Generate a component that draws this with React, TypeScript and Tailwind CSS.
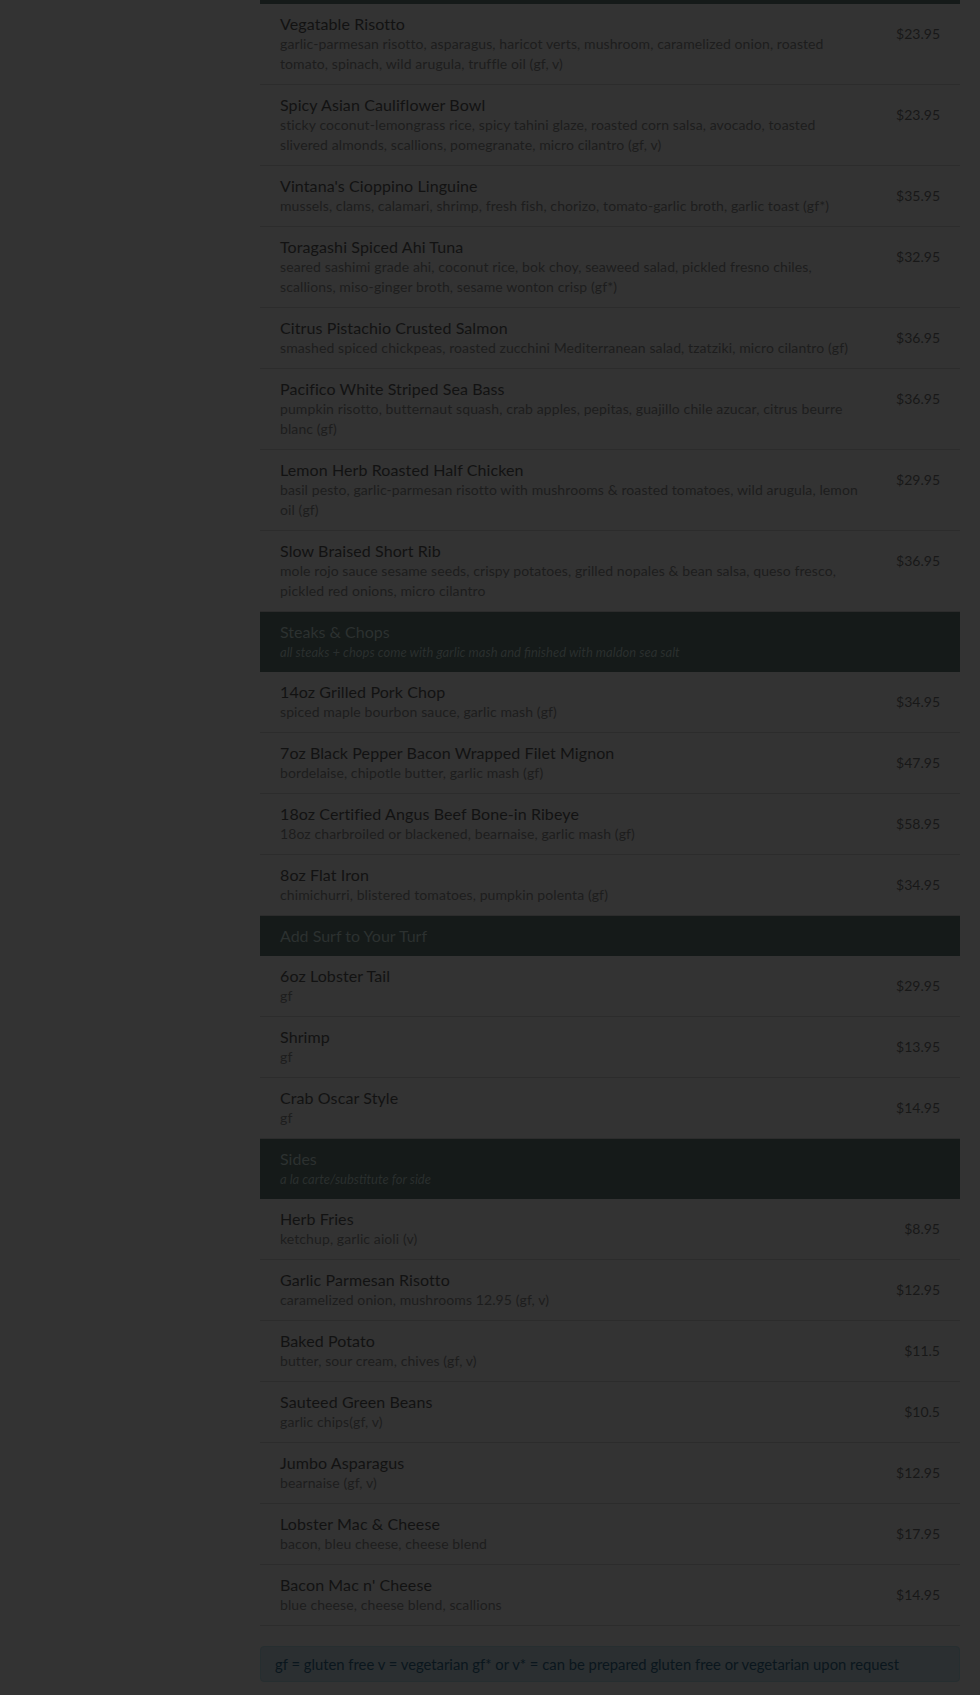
import React from "react";

type Item = { name: string; desc: string; price: string };
type Section = { title?: string; note?: string; items: Item[] };

const sections: Section[] = [
  {
    items: [
      {
        name: "Vegatable Risotto",
        desc: "garlic-parmesan risotto, asparagus, haricot verts, mushroom, caramelized onion, roasted tomato, spinach, wild arugula, truffle oil (gf, v)",
        price: "$23.95",
      },
      {
        name: "Spicy Asian Cauliflower Bowl",
        desc: "sticky coconut-lemongrass rice, spicy tahini glaze, roasted corn salsa, avocado, toasted slivered almonds, scallions, pomegranate, micro cilantro (gf, v)",
        price: "$23.95",
      },
      {
        name: "Vintana's Cioppino Linguine",
        desc: "mussels, clams, calamari, shrimp, fresh fish, chorizo, tomato-garlic broth, garlic toast (gf*)",
        price: "$35.95",
      },
      {
        name: "Toragashi Spiced Ahi Tuna",
        desc: "seared sashimi grade ahi, coconut rice, bok choy, seaweed salad, pickled fresno chiles, scallions, miso-ginger broth, sesame wonton crisp (gf*)",
        price: "$32.95",
      },
      {
        name: "Citrus Pistachio Crusted Salmon",
        desc: "smashed spiced chickpeas, roasted zucchini Mediterranean salad, tzatziki, micro cilantro (gf)",
        price: "$36.95",
      },
      {
        name: "Pacifico White Striped Sea Bass",
        desc: "pumpkin risotto, butternaut squash, crab apples, pepitas, guajillo chile azucar, citrus beurre blanc (gf)",
        price: "$36.95",
      },
      {
        name: "Lemon Herb Roasted Half Chicken",
        desc: "basil pesto, garlic-parmesan risotto with mushrooms & roasted tomatoes, wild arugula, lemon oil (gf)",
        price: "$29.95",
      },
      {
        name: "Slow Braised Short Rib",
        desc: "mole rojo sauce sesame seeds, crispy potatoes, grilled nopales & bean salsa, queso fresco, pickled red onions, micro cilantro",
        price: "$36.95",
      },
    ],
  },
  {
    title: "Steaks & Chops",
    note: "all steaks + chops come with garlic mash and finished with maldon sea salt",
    items: [
      { name: "14oz Grilled Pork Chop", desc: "spiced maple bourbon sauce, garlic mash (gf)", price: "$34.95" },
      { name: "7oz Black Pepper Bacon Wrapped Filet Mignon", desc: "bordelaise, chipotle butter, garlic mash (gf)", price: "$47.95" },
      { name: "18oz Certified Angus Beef Bone-in Ribeye", desc: "18oz charbroiled or blackened, bearnaise, garlic mash (gf)", price: "$58.95" },
      { name: "8oz Flat Iron", desc: "chimichurri, blistered tomatoes, pumpkin polenta (gf)", price: "$34.95" },
    ],
  },
  {
    title: "Add Surf to Your Turf",
    items: [
      { name: "6oz Lobster Tail", desc: "gf", price: "$29.95" },
      { name: "Shrimp", desc: "gf", price: "$13.95" },
      { name: "Crab Oscar Style", desc: "gf", price: "$14.95" },
    ],
  },
  {
    title: "Sides",
    note: "a la carte/substitute for side",
    items: [
      { name: "Herb Fries", desc: "ketchup, garlic aioli (v)", price: "$8.95" },
      { name: "Garlic Parmesan Risotto", desc: "caramelized onion, mushrooms 12.95 (gf, v)", price: "$12.95" },
      { name: "Baked Potato", desc: "butter, sour cream, chives (gf, v)", price: "$11.5" },
      { name: "Sauteed Green Beans", desc: "garlic chips(gf, v)", price: "$10.5" },
      { name: "Jumbo Asparagus", desc: "bearnaise (gf, v)", price: "$12.95" },
      { name: "Lobster Mac & Cheese", desc: "bacon, bleu cheese, cheese blend", price: "$17.95" },
      { name: "Bacon Mac n' Cheese", desc: "blue cheese, cheese blend, scallions", price: "$14.95" },
    ],
  },
];

function MenuRow({ item }: { item: Item }) {
  return (
    <div className="flex border-b border-[#2c2c2c] pl-5 pr-5">
      <div className="w-[585px] pt-[9px] pb-[10px]">
        <div className="text-[16px] leading-[21px] tracking-[0.1px] text-[#121212]">{item.name}</div>
        <div className="text-[14px] leading-[20px] tracking-[0.1px] text-[#1d1d1d]">{item.desc}</div>
      </div>
      <div className="flex-1 pt-[19px] text-right text-[14px] leading-[21px] text-[#181818]">
        {item.price}
      </div>
    </div>
  );
}

function SectionHeader({ title, note }: { title: string; note?: string }) {
  return (
    <div className="bg-[#151a19] px-5 pt-[9px] pb-[10px]">
      <div className="text-[16px] leading-[21px] text-[#2c3130]">{title}</div>
      {note && (
        <div className="text-[13px] italic leading-[20px] text-[#2a2f2e]">{note}</div>
      )}
    </div>
  );
}

export default function App() {
  return (
    <div
      className="min-h-[1695px] bg-[#333333] pb-[14px]"
      style={{ fontFamily: "Lato, 'Open Sans', sans-serif" }}
    >
      <div className="ml-[260px] w-[700px]">
        {/* tail of the entrées header, scrolled off the top */}
        <div className="h-[4px] bg-[#151a19]" />

        {sections.map((section, i) => (
          <div key={i}>
            {section.title && <SectionHeader title={section.title} note={section.note} />}
            {section.items.map((item) => (
              <MenuRow key={item.name} item={item} />
            ))}
          </div>
        ))}

        {/* dietary legend */}
        <div className="mt-5 rounded border border-[#262e30] bg-[#2b2f31] px-[14px] py-[7px] text-[14.8px] leading-[20px] text-[#0a161d]">
          gf = gluten free v = vegetarian gf* or v* = can be prepared gluten free or vegetarian upon request
        </div>
      </div>
    </div>
  );
}
